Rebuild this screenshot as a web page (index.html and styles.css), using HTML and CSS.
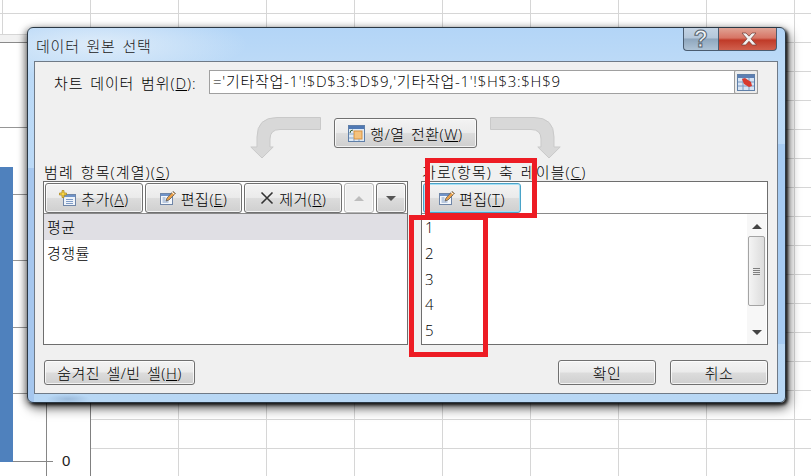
FILE: index.html
```html
<!DOCTYPE html>
<html lang="ko">
<head>
<meta charset="utf-8">
<title>데이터 원본 선택</title>
<link rel="stylesheet" href="styles.css">
</head>
<body>
<svg class="defs" width="0" height="0">
  <defs>
    <symbol id="edit" viewBox="0 0 16 16">
      <rect x="0.5" y="3.5" width="12" height="11" fill="#f4f7fb" stroke="#6f86a8"/>
      <rect x="1" y="4" width="11" height="2" fill="#6f93c8"/>
      <path d="M2.5 8h3M2.5 10h3M2.5 12h6" stroke="#7f9cc6"/>
      <path d="M6 11l1-3 6-6.5 2.5 2L9 10z" fill="#e8a04a" stroke="#5b5b5b" stroke-width=".8"/>
      <path d="M12 2.3l2.4 2" stroke="#fff" stroke-width="1"/>
    </symbol>
  </defs>
</svg>

<div class="chart">
  <div class="chart-edge"></div>
  <div class="chart-axis"></div>
  <div class="chart-line l1"></div>
  <div class="chart-line l2"></div>
  <div class="chart-line l3"></div>
  <div class="chart-line l4"></div>
  <div class="chart-line l5"></div>
  <div class="chart-tick"></div>
  <div class="chart-bar"></div>
  <span class="chart-zero">0</span>
</div>

<div class="dialog">
  <header class="titlebar">
    <h1 class="title">데이터 원본 선택</h1>
    <div class="caption">
      <span class="cap-help">?</span>
      <span class="cap-close">
        <svg width="20" height="14" viewBox="0 0 20 14"><path d="M3 1h4l3 3.2L13 1h4l-5 5.8L17.500 13h-4.200L10 9.300 6.700 13H2.500L8 6.800z" fill="#f2f2f2" stroke="#6d3a34" stroke-width=".7"/></svg>
      </span>
    </div>
  </header>

  <main class="panel">
    <div class="range-row">
      <label class="range-label">차트 데이터 범위(<u>D</u>):</label>
      <div class="range-input">
        <span class="range-text">='기타작업-1'!$D$3:$D$9,'기타작업-1'!$H$3:$H$9</span>
        <span class="range-btn">
          <svg width="18" height="17" viewBox="0 0 18 17">
            <rect x=".5" y=".5" width="17" height="16" fill="#d7e4f4" stroke="#5f7fa8"/>
            <rect x="1" y="1" width="16" height="3" fill="#5c7fb3"/>
            <path d="M1 8h16M1 12h16M6 4v12M12 4v12" stroke="#7c9ac2"/>
            <path d="M5 5l3-1 6 4 1 4-3 1-5-3z" fill="#d83a2e"/>
          </svg>
        </span>
      </div>
    </div>

    <div class="swap-row">
      <svg class="swap-arrow" width="71" height="42" viewBox="0 0 71 42"><path d="M70.500.5H27Q7 .5 7 20v10H.8L12 41l11.200-11H20v-8q0-9.500 10-9.500h40.500z" fill="#d8d8d8" stroke="#c9c9c9"/></svg>
      <button class="btn btn-swap">
        <svg width="17" height="17" viewBox="0 0 17 17">
          <rect x=".5" y=".5" width="16" height="16" fill="#dfeaf6" stroke="#5f7fa8"/>
          <rect x="1" y="1" width="15" height="3" fill="#4f78b4"/>
          <rect x="6" y="6" width="8" height="8" fill="#f4c27e" stroke="#d9913f"/>
          <path d="M1 9h5M1 13h5M6 14v2M11 14v2" stroke="#8aa6c8"/>
          <path d="M2 8q0-3 3-3" fill="none" stroke="#2f5f2f"/>
        </svg>
        <span>행/열 전환(<u>W</u>)</span>
      </button>
      <svg class="swap-arrow flip" width="71" height="42" viewBox="0 0 71 42"><path d="M70.500.5H27Q7 .5 7 20v10H.8L12 41l11.200-11H20v-8q0-9.500 10-9.500h40.500z" fill="#d8d8d8" stroke="#c9c9c9"/></svg>
    </div>

    <div class="columns">
      <section class="col">
        <div class="col-label">범례 항목(계열)(<u>S</u>)</div>
        <div class="box">
          <div class="toolbar">
            <button class="btn btn-tool">
              <svg width="17" height="16" viewBox="0 0 17 16">
                <rect x="4.500" y="4.500" width="12" height="11" fill="#eef3fa" stroke="#6f86a8"/>
                <rect x="5" y="5" width="11" height="2" fill="#6f93c8"/>
                <path d="M7 9.500h7M7 11.500h7M7 13.500h7" stroke="#7f9cc6"/>
                <path d="M3 .5h2v2.500h2.500v2H5v2.500H3V5H.5V3H3z" fill="#f5d44a" stroke="#b08a1e" stroke-width=".8"/>
              </svg>
              <span>추가(<u>A</u>)</span>
            </button>
            <button class="btn btn-tool">
              <svg class="ico-edit" width="16" height="16"><use href="#edit"/></svg>
              <span>편집(<u>E</u>)</span>
            </button>
            <button class="btn btn-tool">
              <svg width="14" height="14" viewBox="0 0 14 14"><path d="M1.500 1.500l11 11M12.500 1.500l-11 11" stroke="#333" stroke-width="1.600"/></svg>
              <span>제거(<u>R</u>)</span>
            </button>
            <button class="btn btn-small btn-off"><i class="tri up light"></i></button>
            <button class="btn btn-small"><i class="tri down"></i></button>
          </div>
          <ul class="list">
            <li class="selected">평균</li>
            <li>경쟁률</li>
          </ul>
        </div>
      </section>

      <section class="col">
        <div class="col-label">가로(항목) 축 레이블(<u>C</u>)</div>
        <div class="box">
          <div class="toolbar">
            <button class="btn btn-tool btn-focus">
              <svg class="ico-edit" width="16" height="16"><use href="#edit"/></svg>
              <span>편집(<u>T</u>)</span>
            </button>
          </div>
          <div class="list-wrap">
            <ul class="list digits">
              <li>1</li>
              <li>2</li>
              <li>3</li>
              <li>4</li>
              <li>5</li>
            </ul>
            <div class="scrollbar">
              <i class="tri up small"></i>
              <div class="thumb"><b></b><b></b><b></b><b></b></div>
              <i class="tri down small"></i>
            </div>
          </div>
        </div>
      </section>
    </div>

    <footer class="footer">
      <button class="btn btn-hidden"><span>숨겨진 셀/빈 셀(<u>H</u>)</span></button>
      <div class="footer-right">
        <button class="btn btn-action">확인</button>
        <button class="btn btn-action">취소</button>
      </div>
    </footer>
  </main>
</div>

<div class="mark mark-edit"></div>
<div class="mark mark-list"></div>
</body>
</html>
```

FILE: styles.css
```css
* { box-sizing: border-box; }
html, body { margin: 0; height: 100%; }
body {
  width: 811px;
  height: 476px;
  overflow: hidden;
  position: relative;
  background-color: #fff;
  background-image:
    linear-gradient(90deg, #d6d6d6 1px, transparent 1px),
    linear-gradient(180deg, #d6d6d6 1px, transparent 1px);
  background-size: 88px 29px;
  background-position: 2px 13px;
  font-family: "Open Sans", "Noto Sans CJK KR", sans-serif;
  font-size: 15px;
  font-weight: 300;
  letter-spacing: .5px;
  word-spacing: 2px;
  color: #000;
}
.defs { position: absolute; }

/* worksheet chart behind the dialog */
.chart {
  position: absolute;
  left: 0;
  top: 42px;
  width: 91px;
  height: 434px;
  background: #fff;
  border-top: 1px solid #8a8a8a;
  border-right: 1px solid #808080;
}
.chart-edge {
  position: absolute;
  left: 0;
  top: -9px;
  width: 90px;
  height: 8px;
  background: #f1f1f1;
  border-top: 1px solid #d6d6d6;
}
.chart-bar { position: absolute; left: 0; top: 124px; width: 13px; height: 295px; background: #4f81bd; }
.chart-axis { position: absolute; left: 46px; top: 0; width: 1px; height: 100%; background: #868686; }
.chart-line { position: absolute; left: 0; width: 46px; height: 1px; background: #969696; }
.l1 { top: 84px; }
.l2 { top: 151px; }
.l3 { top: 217px; }
.l4 { top: 284px; }
.l5 { top: 350px; }
.chart-tick { position: absolute; left: 0; top: 418px; width: 53px; height: 1px; background: #868686; }
.chart-zero { position: absolute; left: 62px; top: 409px; font-family: "Liberation Sans", sans-serif; font-size: 15px; font-weight: 400; line-height: 18px; color: #222; letter-spacing: 0; }

/* dialog window */
.dialog {
  position: absolute;
  left: 27px;
  top: 27px;
  width: 759px;
  height: 376px;
  padding: 0 7px 8px 6px;
  display: flex;
  flex-direction: column;
  border: 1px solid #2b3844;
  border-radius: 6px;
  background:
    radial-gradient(ellipse 150px 34px at 70px 16px, rgba(235, 243, 250, .75), transparent),
    radial-gradient(ellipse 22px 5px at 40px 371px, rgba(90, 120, 160, .3), transparent),
    linear-gradient(#a6c7ee, #a6c7ee) 0 140px / 6px 100% no-repeat,
    linear-gradient(#a6cbf2, #a6cbf2) 100% 116px / 7px 200px no-repeat,
    linear-gradient(180deg, #b3d5f7 0, #bcdaf7 34px, #b8d7f4 100%);
  box-shadow: 2px 2px 3px rgba(0, 0, 0, .75), 3px 5px 12px rgba(0, 0, 0, .6), -2px 2px 7px rgba(0, 0, 0, .4);
}
.titlebar {
  height: 33px;
  flex: none;
  display: flex;
  justify-content: space-between;
  align-items: flex-start;
}
.title {
  margin: 8px 0 0 2px;
  font-size: 15px;
  font-weight: 300;
  line-height: 20px;
  color: #1a1a1a;
  letter-spacing: .8px;
  word-spacing: 2px;
}
.caption { display: flex; height: 23px; margin-right: 1px; }
.cap-help, .cap-close {
  display: flex;
  align-items: center;
  justify-content: center;
  height: 23px;
  border: 1px solid #4a5c70;
  border-top: 0;
}
.cap-help {
  width: 35px;
  border-right: 0;
  border-radius: 0 0 0 4px;
  background: linear-gradient(180deg, #c3d3e4 0, #b4c7da 45%, #8ea6bd 50%, #aec3d6 100%);
  font-family: "Liberation Sans", sans-serif;
  font-size: 23px;
  font-weight: 700;
  color: #eef2f6;
  -webkit-text-stroke: 1px #56636f;
}
.cap-close {
  width: 59px;
  padding-left: 2px;
  border-radius: 0 0 4px 0;
  background: linear-gradient(180deg, #e0a395 0, #d77565 45%, #c03a28 55%, #d0604e 100%);
}

.panel {
  flex: 1;
  display: flex;
  flex-direction: column;
  padding: 8px 9px 0 8px;
  background: #f0f0f0;
  border: 1px solid #6f7a87;
}

.range-row {
  display: flex;
  align-items: center;
  height: 24px;
  padding-left: 11px;
  margin-right: 10px;
}
.range-label { width: 155px; flex: none; white-space: nowrap; letter-spacing: .9px; }
.range-input {
  flex: 1;
  height: 24px;
  display: flex;
  align-items: center;
  justify-content: space-between;
  padding-left: 3px;
  background: #fff;
  border: 1px solid #a0a0a0;
}
.range-btn {
  width: 24px;
  height: 24px;
  margin-right: -1px;
  display: flex;
  align-items: center;
  justify-content: center;
  background: #ececec;
  border: 1px solid #9a9a9a;
  border-radius: 2px;
}
.range-text { white-space: nowrap; letter-spacing: .72px; line-height: 20px; margin-top: -2px; }

.swap-row {
  display: flex;
  justify-content: center;
  align-items: flex-start;
  gap: 13px;
  height: 42px;
  margin-top: 23px;
}
.flip { transform: scaleX(-1); }

.btn {
  display: inline-flex;
  align-items: center;
  justify-content: center;
  gap: 5px;
  margin: 0;
  padding: 0;
  font: inherit;
  letter-spacing: inherit;
  word-spacing: inherit;
  color: #000;
  white-space: nowrap;
  border: 1px solid #707070;
  border-radius: 3px;
  background: linear-gradient(180deg, #f3f3f3 0, #ebebeb 48%, #dcdcdc 52%, #cfcfcf 100%);
  box-shadow: inset 0 0 0 1px rgba(255, 255, 255, .75);
}
.btn-swap { width: 143px; height: 30px; margin-top: 1px; }
.btn-tool { width: 98px; height: 30px; }
.btn-small { width: 30px; height: 30px; }
.btn-off { border-color: #b4b4b4; background: #efefef; }
.btn-focus {
  border-color: #4aa3c8;
  box-shadow: inset 0 0 0 1px #a8e0f5;
  gap: 4px;
}
.btn-hidden { width: 151px; height: 25px; margin-left: 1px; }
.btn-action { width: 98px; height: 25px; }

.columns {
  display: grid;
  grid-template-columns: 365px 347px;
  gap: 13px;
  margin-top: 5px;
}
.col-label { height: 17px; line-height: 16px; padding-left: 1px; white-space: nowrap; letter-spacing: 1.1px; }
.box {
  height: 164px;
  display: flex;
  flex-direction: column;
  background: #fff;
  border: 1px solid #6e6e6e;
}
.toolbar {
  height: 32px;
  flex: none;
  display: flex;
  gap: 2px;
  padding: 1px 1px 0 1px;
  border-bottom: 1px solid #8a8a8a;
}
.list { margin: 0; padding: 0; list-style: none; flex: 1; }
.list li { height: 26px; line-height: 27px; padding-left: 3px; }
.list .selected { background: #e0dfe4; line-height: 26px; }
.list-wrap { flex: 1; display: flex; min-height: 0; }
.digits li { height: 25.75px; }

.scrollbar {
  width: 19px;
  flex: none;
  margin-right: 1px;
  display: flex;
  flex-direction: column;
  align-items: center;
  padding-top: 10px;
  background: #f7f7f7;
}
.thumb {
  width: 17px;
  height: 70px;
  margin-top: 7px;
  display: flex;
  flex-direction: column;
  align-items: center;
  justify-content: center;
  gap: 1px;
  border: 1px solid #a4a4a4;
  border-radius: 2px;
  background: linear-gradient(90deg, #f4f4f4, #dcdcdc);
}
.thumb b { width: 7px; height: 1px; background: #7f7f7f; }

.tri { display: block; width: 0; height: 0; border-left: 5px solid transparent; border-right: 5px solid transparent; }
.tri.up { border-bottom: 5px solid #555; }
.tri.down { border-top: 5px solid #555; }
.tri.light { border-bottom-color: #bdbdbd; }
.tri.small { border-left-width: 5px; border-right-width: 5px; }
.tri.small.up { border-bottom: 5px solid #444; }
.tri.small.down { border-top: 5px solid #444; margin-top: 24px; }

.footer {
  display: flex;
  justify-content: space-between;
  margin-top: 15px;
}
.footer-right { display: flex; gap: 14px; }

/* red annotation rectangles drawn over the screenshot */
.mark { position: absolute; border: 5px solid #ed1c24; }
.mark-edit { left: 425px; top: 158px; width: 112px; height: 60px; }
.mark-list { left: 409px; top: 215px; width: 79px; height: 142px; }
```
